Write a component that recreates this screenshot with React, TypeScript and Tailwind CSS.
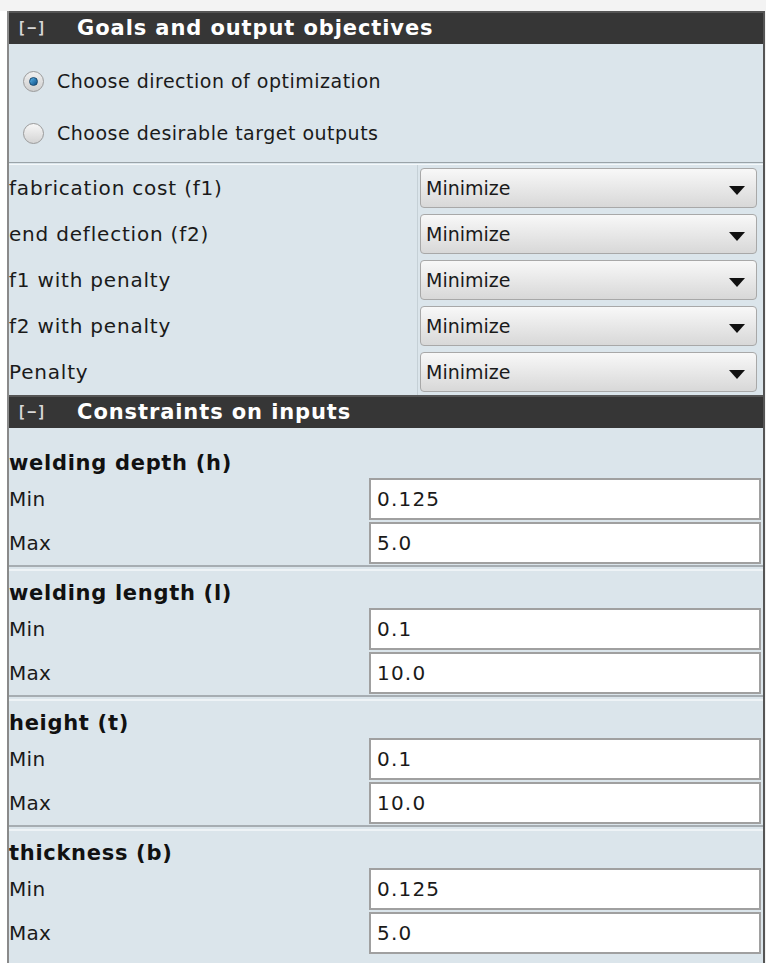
import React from "react";

const objectives = [
  "fabrication cost (f1)",
  "end deflection (f2)",
  "f1 with penalty",
  "f2 with penalty",
  "Penalty",
];

const constraints = [
  { name: "welding depth (h)", min: "0.125", max: "5.0" },
  { name: "welding length (l)", min: "0.1", max: "10.0" },
  { name: "height (t)", min: "0.1", max: "10.0" },
  { name: "thickness (b)", min: "0.125", max: "5.0" },
];

function SectionHeader({ title }: { title: string }) {
  return (
    <div className="h-[33px] bg-[#363636] border-t-2 border-[#555] flex items-center">
      <span className="ml-[8px] text-[15px] font-bold text-[#d8d8d8] tracking-[1px] font-['DejaVu_Sans_Mono',monospace]">
        [−]
      </span>
      <span className="ml-[30px] text-[21px] font-bold text-white leading-none tracking-[0.9px]">
        {title}
      </span>
    </div>
  );
}

function Radio({ checked, label }: { checked?: boolean; label: string }) {
  return (
    <div className="h-[52px] flex items-center pl-[14px]">
      <div
        className={`w-[21px] h-[21px] rounded-full border border-[#9a9a9a] flex items-center justify-center ${
          checked
            ? "bg-gradient-to-b from-[#f0f0f0] to-[#cfcfcf]"
            : "bg-gradient-to-b from-[#f7f7f7] to-[#d4d4d4]"
        }`}
      >
        {checked && (
          <div className="w-[9px] h-[9px] rounded-full bg-gradient-to-br from-[#5ab4e8] to-[#0d4f86] border border-[#1a4a70]" />
        )}
      </div>
      <span className="ml-[13px] text-[19px] tracking-[0.5px] text-[#1a1a1a]">{label}</span>
    </div>
  );
}

function Dropdown() {
  return (
    <div className="h-[40px] flex-1 mr-[6px] rounded-[4px] border border-[#a8a8a8] bg-gradient-to-b from-[#f8f8f8] via-[#e8e8e8] to-[#d8d8d8] flex items-center justify-between px-[5px]">
      <span className="text-[19px] text-[#1a1a1a]">Minimize</span>
      <svg width="16" height="9" viewBox="0 0 16 9" className="mr-[6px] mt-[4px]">
        <polygon points="0,0 16,0 8,9" fill="#111" />
      </svg>
    </div>
  );
}

function InputRow({ label, value }: { label: string; value: string }) {
  return (
    <div className="h-[44px] flex items-center">
      <span className="w-[360px] text-[20px] tracking-[0.3px] text-[#1a1a1a]">{label}</span>
      <div className="h-[42px] flex-1 mr-[2px] bg-white border-2 border-[#a0a0a0] flex items-center px-[6px]">
        <span className="text-[20px] tracking-[1.2px] text-[#1a1a1a]">{value}</span>
      </div>
    </div>
  );
}

export default function App() {
  return (
    <div className="w-[766px] h-[963px] bg-[#f3f3f3] flex flex-col font-['DejaVu_Sans',Verdana,sans-serif] overflow-hidden">
      <div className="h-[11px] shrink-0" />
      <div className="flex-1 flex">
        <div className="w-[7px] bg-white shrink-0" />
        <div className="flex-1 bg-[#dbe5eb] border-l-2 border-[#8a8a8a] border-r-2 border-r-[#555] mr-[1px] flex flex-col">
          <SectionHeader title="Goals and output objectives" />
          <div className="pt-[11px] pb-[3px]">
            <Radio checked label="Choose direction of optimization" />
            <Radio label="Choose desirable target outputs" />
          </div>
          <div className="h-[3px] border-t border-[#9aa3a8] border-b border-b-[#f4f8fa]" />
          <div className="flex flex-col">
            {objectives.map((o) => (
              <div key={o} className="h-[46px] flex items-center">
                <span className="w-[408px] text-[20px] tracking-[0.8px] text-[#1a1a1a]">{o}</span>
                <div className="h-full flex items-center flex-1 border-l border-[#c5d0d6] pl-[2px]">
                  <Dropdown />
                </div>
              </div>
            ))}
          </div>
          <SectionHeader title="Constraints on inputs" />
          <div className="flex flex-col pt-[13px]">
            {constraints.map((c, i) => (
              <div key={c.name} className="flex flex-col">
                <div className="h-[36px] flex items-center pt-[9px]">
                  <span className="text-[21px] font-bold tracking-[0.7px] text-[#111]">{c.name}</span>
                </div>
                <InputRow label="Min" value={c.min} />
                <InputRow label="Max" value={c.max} />
                {i < constraints.length - 1 && (
                  <div className="h-[6px] border-t-2 border-[#a6adb2] border-b-2 border-b-[#eef3f6]" />
                )}
              </div>
            ))}
          </div>
        </div>
      </div>
    </div>
  );
}
